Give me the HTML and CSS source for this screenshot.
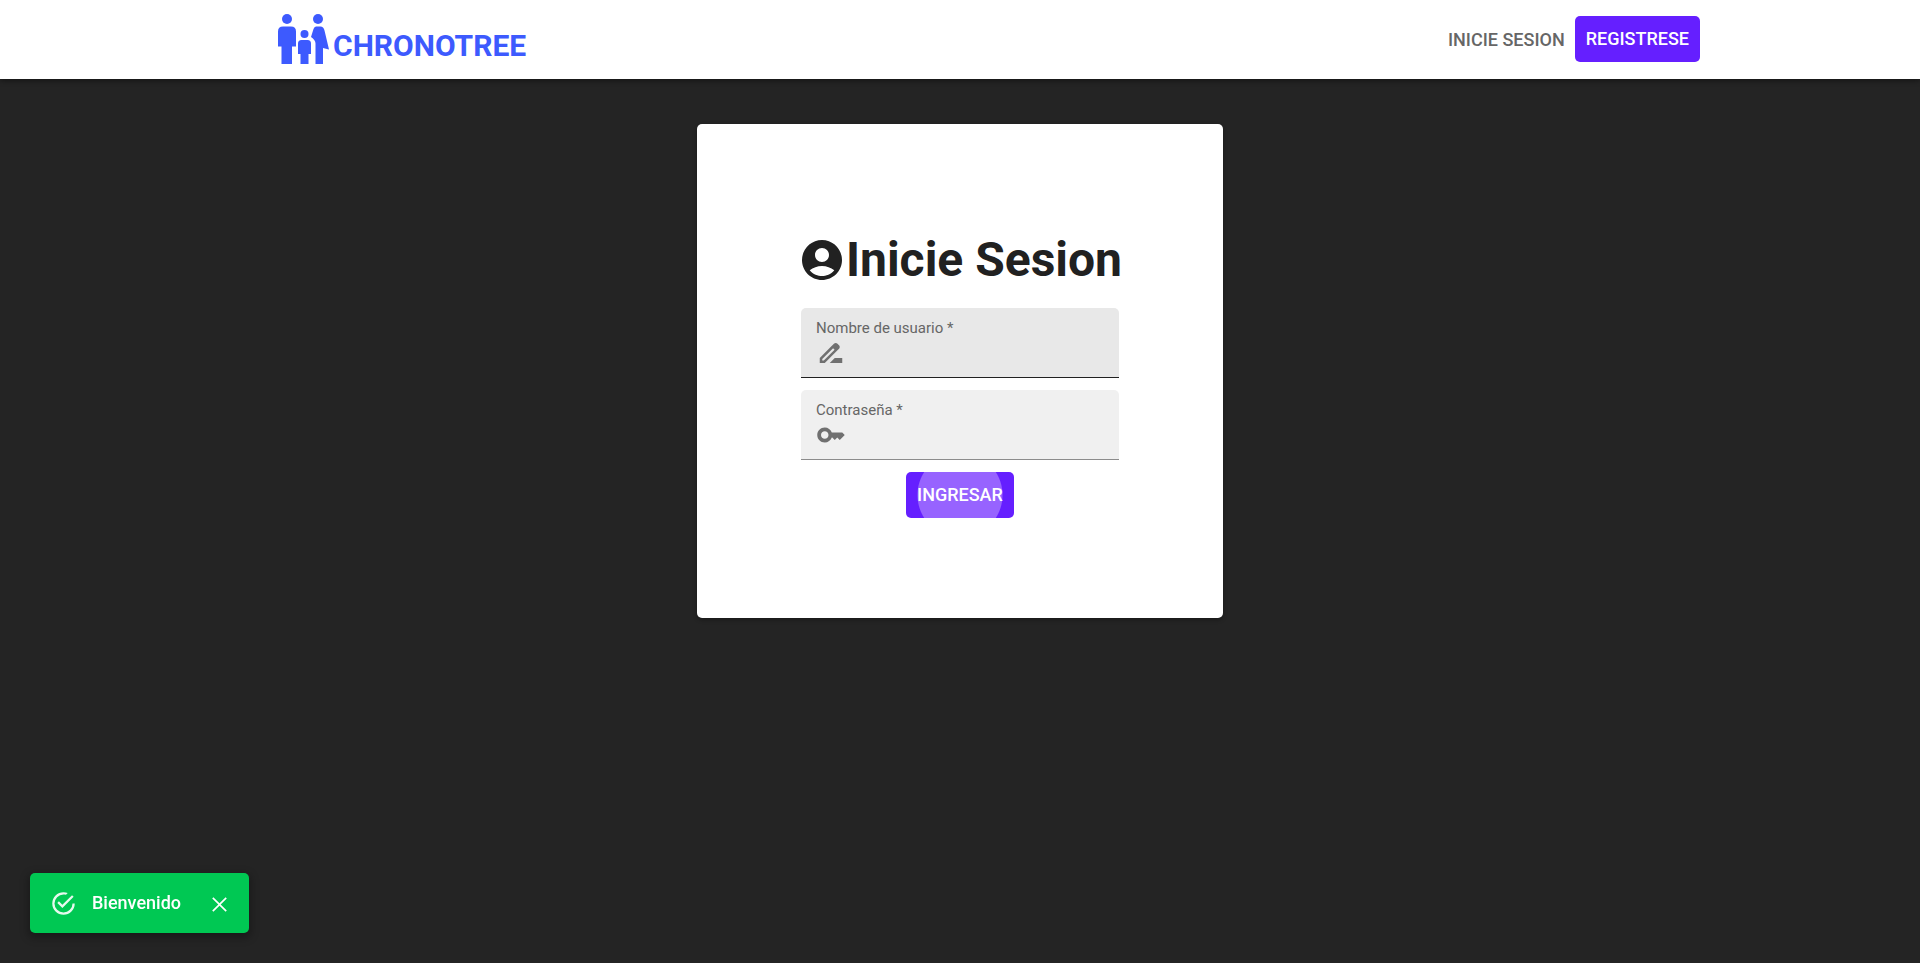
FILE: index.html
```html
<!DOCTYPE html>
<html lang="es">
<head>
<meta charset="utf-8">
<title>Chronotree</title>
<link rel="stylesheet" href="styles.css">
</head>
<body>
<header class="topbar">
  <div class="topbar-inner">
    <a class="brand" href="#">
      <svg class="brand-icon" viewBox="0 0 51 50" aria-hidden="true">
        <circle cx="9" cy="5" r="5"/>
        <path d="M5 12.500h8q5 0 5 5v15h-4v17.500H3.500V32.500H0v-15q0-5 5-5z"/>
        <circle cx="26.500" cy="20" r="4"/>
        <path d="M23.500 26h6q3.500 0 3.500 3.500V40h-2.500v10h-8V40H20V29.500q0-3.500 3.500-3.500z"/>
        <circle cx="40" cy="5" r="5"/>
        <path d="M38 12.500h4.500q3 0 4 4L51 35.500l-6-1.500v16h-7.500V29.500q0-3.500-4.500-6.500l2.500-8q.8-2.500 2.500-2.500z"/>
      </svg>
      <span>CHRONOTREE</span>
    </a>
    <nav class="nav">
      <a class="nav-link" href="#">INICIE SESION</a>
      <button class="button" type="button">REGISTRESE</button>
    </nav>
  </div>
</header>
<main class="page">
  <form class="card">
    <h1 class="title">
      <svg class="title-icon" viewBox="0 0 24 24" aria-hidden="true"><path d="M12 2C6.480 2 2 6.480 2 12s4.480 10 10 10 10-4.480 10-10S17.520 2 12 2zm0 4c1.930 0 3.500 1.570 3.500 3.500S13.930 13 12 13s-3.500-1.570-3.500-3.500S10.070 6 12 6zm0 14c-2.030 0-4.430-.820-6.140-2.880C7.550 15.800 9.680 15 12 15s4.450.800 6.140 2.120C16.430 19.180 14.030 20 12 20z"/></svg>
      <span>Inicie Sesion</span>
    </h1>
    <div class="field field-hover">
      <label class="field-label" for="user">Nombre de usuario *</label>
      <div class="field-row">
        <svg class="field-icon" viewBox="0 0 24 24" aria-hidden="true"><path d="M18.410 5.800 17.200 4.590c-.780-.780-2.050-.780-2.830 0l-2.680 2.680L3 15.960V20h4.040l8.740-8.740 2.630-2.630c.790-.780.790-2.050 0-2.830zM6.210 18H5v-1.210l8.660-8.660 1.210 1.210L6.210 18zM11 20l4-4h6v4H11z"/></svg>
        <input class="field-input" id="user" type="text" autocomplete="off">
      </div>
    </div>
    <div class="field">
      <label class="field-label" for="pass">Contraseña *</label>
      <div class="field-row">
        <svg class="field-icon" viewBox="0 0 24 24" aria-hidden="true"><path d="M21 10h-8.350C11.830 7.670 9.610 6 7 6c-3.310 0-6 2.690-6 6s2.690 6 6 6c2.610 0 4.830-1.670 5.650-4H13l2 2 2-2 2 2 4-4.040L21 10zM7 15c-1.650 0-3-1.350-3-3s1.350-3 3-3 3 1.350 3 3-1.350 3-3 3z"/></svg>
        <input class="field-input" id="pass" type="password">
      </div>
    </div>
    <button class="button button-ripple" type="submit">INGRESAR</button>
  </form>
</main>
<div class="toast" role="alert">
  <svg class="toast-icon" viewBox="0 0 24 24" aria-hidden="true"><path d="M20 12a8 8 0 0 1-8 8 8 8 0 0 1-8-8 8 8 0 0 1 8-8c.760 0 1.500.110 2.200.310l1.570-1.570A9.822 9.822 0 0 0 12 2 10 10 0 0 0 2 12a10 10 0 0 0 10 10 10 10 0 0 0 10-10M7.910 10.080 6.500 11.500 11 16 21 6l-1.410-1.420L11 13.170z"/></svg>
  <span>Bienvenido</span>
  <button class="toast-close" type="button" aria-label="Cerrar">
    <svg class="close-icon" viewBox="0 0 24 24" aria-hidden="true"><path d="M19 6.130 17.870 5 12 10.870 6.130 5 5 6.130 10.870 12 5 17.870 6.130 19 12 13.130 17.870 19 19 17.870 13.130 12z"/></svg>
  </button>
</div>
</body>
</html>
```

FILE: styles.css
```css
* {
  box-sizing: border-box;
}

body {
  margin: 0;
  min-height: 100vh;
  background: #242424;
  color: #212121;
  font-family: Roboto, "Liberation Sans", sans-serif;
  font-size: 18px;
}

svg {
  display: block;
  flex: none;
  fill: currentColor;
}

.topbar {
  background: #fff;
  box-shadow: 0 2px 5px rgba(0, 0, 0, 0.4);
}

.topbar-inner {
  display: flex;
  justify-content: space-between;
  align-items: center;
  padding: 14px 11.46% 15px 14.48%;
}

.brand {
  display: flex;
  align-items: flex-end;
  gap: 4px;
  color: #3d5afe;
  font-size: 30px;
  font-weight: 700;
  line-height: 36px;
  text-decoration: none;
}

.brand-icon {
  width: 51px;
  height: 50px;
}

.nav {
  display: flex;
  align-items: center;
  gap: 10px;
}

.nav-link {
  color: #666;
  font-weight: 500;
  text-decoration: none;
}

.button {
  padding: 8px 11px;
  border: 0;
  border-radius: 5px;
  background: #651fff;
  color: #fff;
  font: 500 18px/30px Roboto, "Liberation Sans", sans-serif;
}

.page {
  display: flex;
  justify-content: center;
  padding: 45px 16px;
}

.card {
  display: flex;
  flex-direction: column;
  align-items: center;
  gap: 12px;
  padding: 100px 101px;
  border-radius: 5px;
  background: #fff;
  box-shadow: 0 2px 4px rgba(0, 0, 0, 0.3);
}

.title {
  display: flex;
  align-items: center;
  margin: 0 0 8px;
  padding: 8px 0 0;
  font-size: 48px;
  font-weight: 700;
  line-height: 56px;
  white-space: nowrap;
}

.title-icon {
  width: 48px;
  height: 48px;
}

.field {
  width: 318px;
  padding: 10px 15px 9px;
  border-bottom: 1px solid #8c8c8c;
  border-radius: 5px 5px 0 0;
  background: #f0f0f0;
}

.field-hover {
  border-bottom-color: #212121;
  background: #e8e8e8;
}

.field-label {
  display: block;
  color: #666;
  font-size: 15px;
  line-height: 20px;
}

.field-row {
  display: flex;
  align-items: center;
  gap: 8px;
  color: #707070;
}

.field-icon {
  width: 30px;
  height: 30px;
}

.field-input {
  flex: 1;
  min-width: 0;
  padding: 0;
  border: 0;
  outline: 0;
  background: transparent;
  font: 18px/24px Roboto, "Liberation Sans", sans-serif;
}

.button-ripple {
  background: radial-gradient(circle at 50% 50%, #9763ff 42px, #651fff 43px);
}

.toast {
  position: fixed;
  bottom: 30px;
  left: 30px;
  display: flex;
  align-items: center;
  padding: 10px 17px 10px 20px;
  border-radius: 5px;
  background: #00c853;
  box-shadow: 0 3px 8px 2px rgba(0, 0, 0, 0.3);
  color: #fff;
  font-weight: 500;
  line-height: 40px;
}

.toast-icon {
  width: 27px;
  height: 27px;
  margin-right: 15px;
  opacity: 0.9;
}

.toast-close {
  margin-left: 26px;
  padding: 2px 0 0;
  border: 0;
  background: transparent;
  color: #fff;
}

.close-icon {
  width: 25px;
  height: 25px;
}
```
